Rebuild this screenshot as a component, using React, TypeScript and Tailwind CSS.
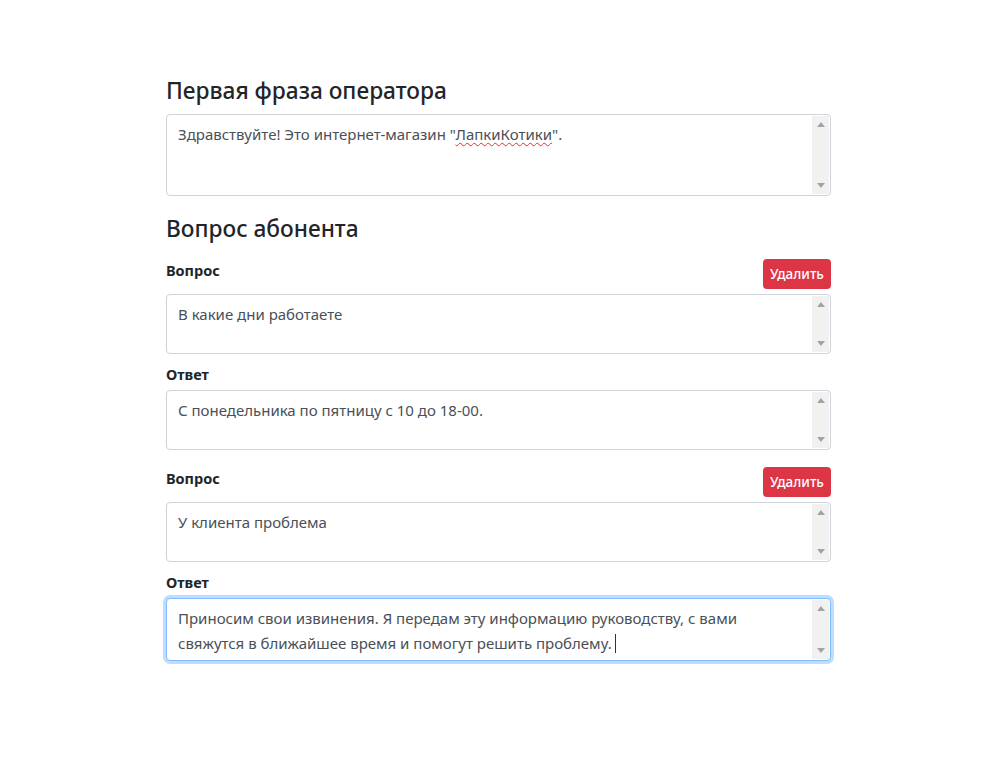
import React from 'react';

interface Pair {
  id: string;
  question: string;
  answer: string;
  focused?: boolean;
}

const pairs: Pair[] = [
  { id: '1', question: 'В какие дни работаете', answer: 'С понедельника по пятницу с 10 до 18-00.' },
  {
    id: '2',
    question: 'У клиента проблема',
    answer: 'Приносим свои извинения. Я передам эту информацию руководству, с вами свяжутся в ближайшее время и помогут решить проблему.',
    focused: true,
  },
];

const Scrollbar: React.FC = () => (
  <div className="flex w-[17px] shrink-0 flex-col items-center justify-between bg-[#f1f1f1] py-[6px]">
    <svg width="8" height="5" viewBox="0 0 8 5">
      <path d="M0 5 L4 0 L8 5 Z" fill="#a3a3a3" />
    </svg>
    <svg width="8" height="5" viewBox="0 0 8 5">
      <path d="M0 0 L4 5 L8 0 Z" fill="#a3a3a3" />
    </svg>
  </div>
);

const TextBox: React.FC<{ height: string; focused?: boolean; children: React.ReactNode }> = ({ height, focused, children }) => (
  <div
    className={
      'flex rounded-[4px] border bg-white ' +
      height +
      (focused ? ' border-[#80bdff] shadow-[0_0_0_3px_rgba(0,123,255,0.25)]' : ' border-[#ced4da]')
    }
  >
    <div className="flex-1 pl-[11px] pr-[24px] py-[7px] text-[15px] leading-[24px] text-[#495057]">{children}</div>
    <div className="flex py-[1px] pr-[1px]">
      <Scrollbar />
    </div>
  </div>
);

const DeleteButton: React.FC = () => (
  <button className="h-[30px] w-[68px] rounded-[4px] bg-[#dc3545] text-[13.5px] font-medium text-white">Удалить</button>
);

export default function App() {
  return (
    <div className="min-h-[759px] w-full bg-white font-['Noto_Sans','Liberation_Sans',sans-serif] text-[#212529]">
      <main className="ml-[166px] w-[665px] pt-[77px]">
        <h2 className="text-[22.7px] font-medium leading-[28px]">Первая фраза оператора</h2>
        <div className="mt-[9px]">
          <TextBox height="h-[82px]">
            Здравствуйте! Это интернет-магазин "
            <span className="underline decoration-wavy decoration-[#e03030] decoration-1 underline-offset-2">ЛапкиКотики</span>".
          </TextBox>
        </div>

        <h2 className="mt-[19px] text-[22.7px] font-medium leading-[28px]">Вопрос абонента</h2>

        {pairs.map((pair, i) => (
          <div key={pair.id} className={i === 0 ? 'mt-[16px]' : 'mt-[17px]'}>
            <div className="flex items-start justify-between">
              <label className="pt-[1px] text-[14.5px] font-bold leading-[20px]">Вопрос</label>
              <DeleteButton />
            </div>
            <div className="mt-[5px]">
              <TextBox height="h-[60px]">{pair.question}</TextBox>
            </div>
            <label className="mt-[10px] block text-[14.5px] font-bold leading-[20px]">Ответ</label>
            <div className="mt-[6px]">
              <TextBox height={pair.focused ? 'h-[63px]' : 'h-[60px]'} focused={pair.focused}>
                {pair.answer}
                {pair.focused && <span className="ml-[3px] inline-block h-[19px] w-px translate-y-[4px] bg-[#333]" />}
              </TextBox>
            </div>
          </div>
        ))}
      </main>
    </div>
  );
}
